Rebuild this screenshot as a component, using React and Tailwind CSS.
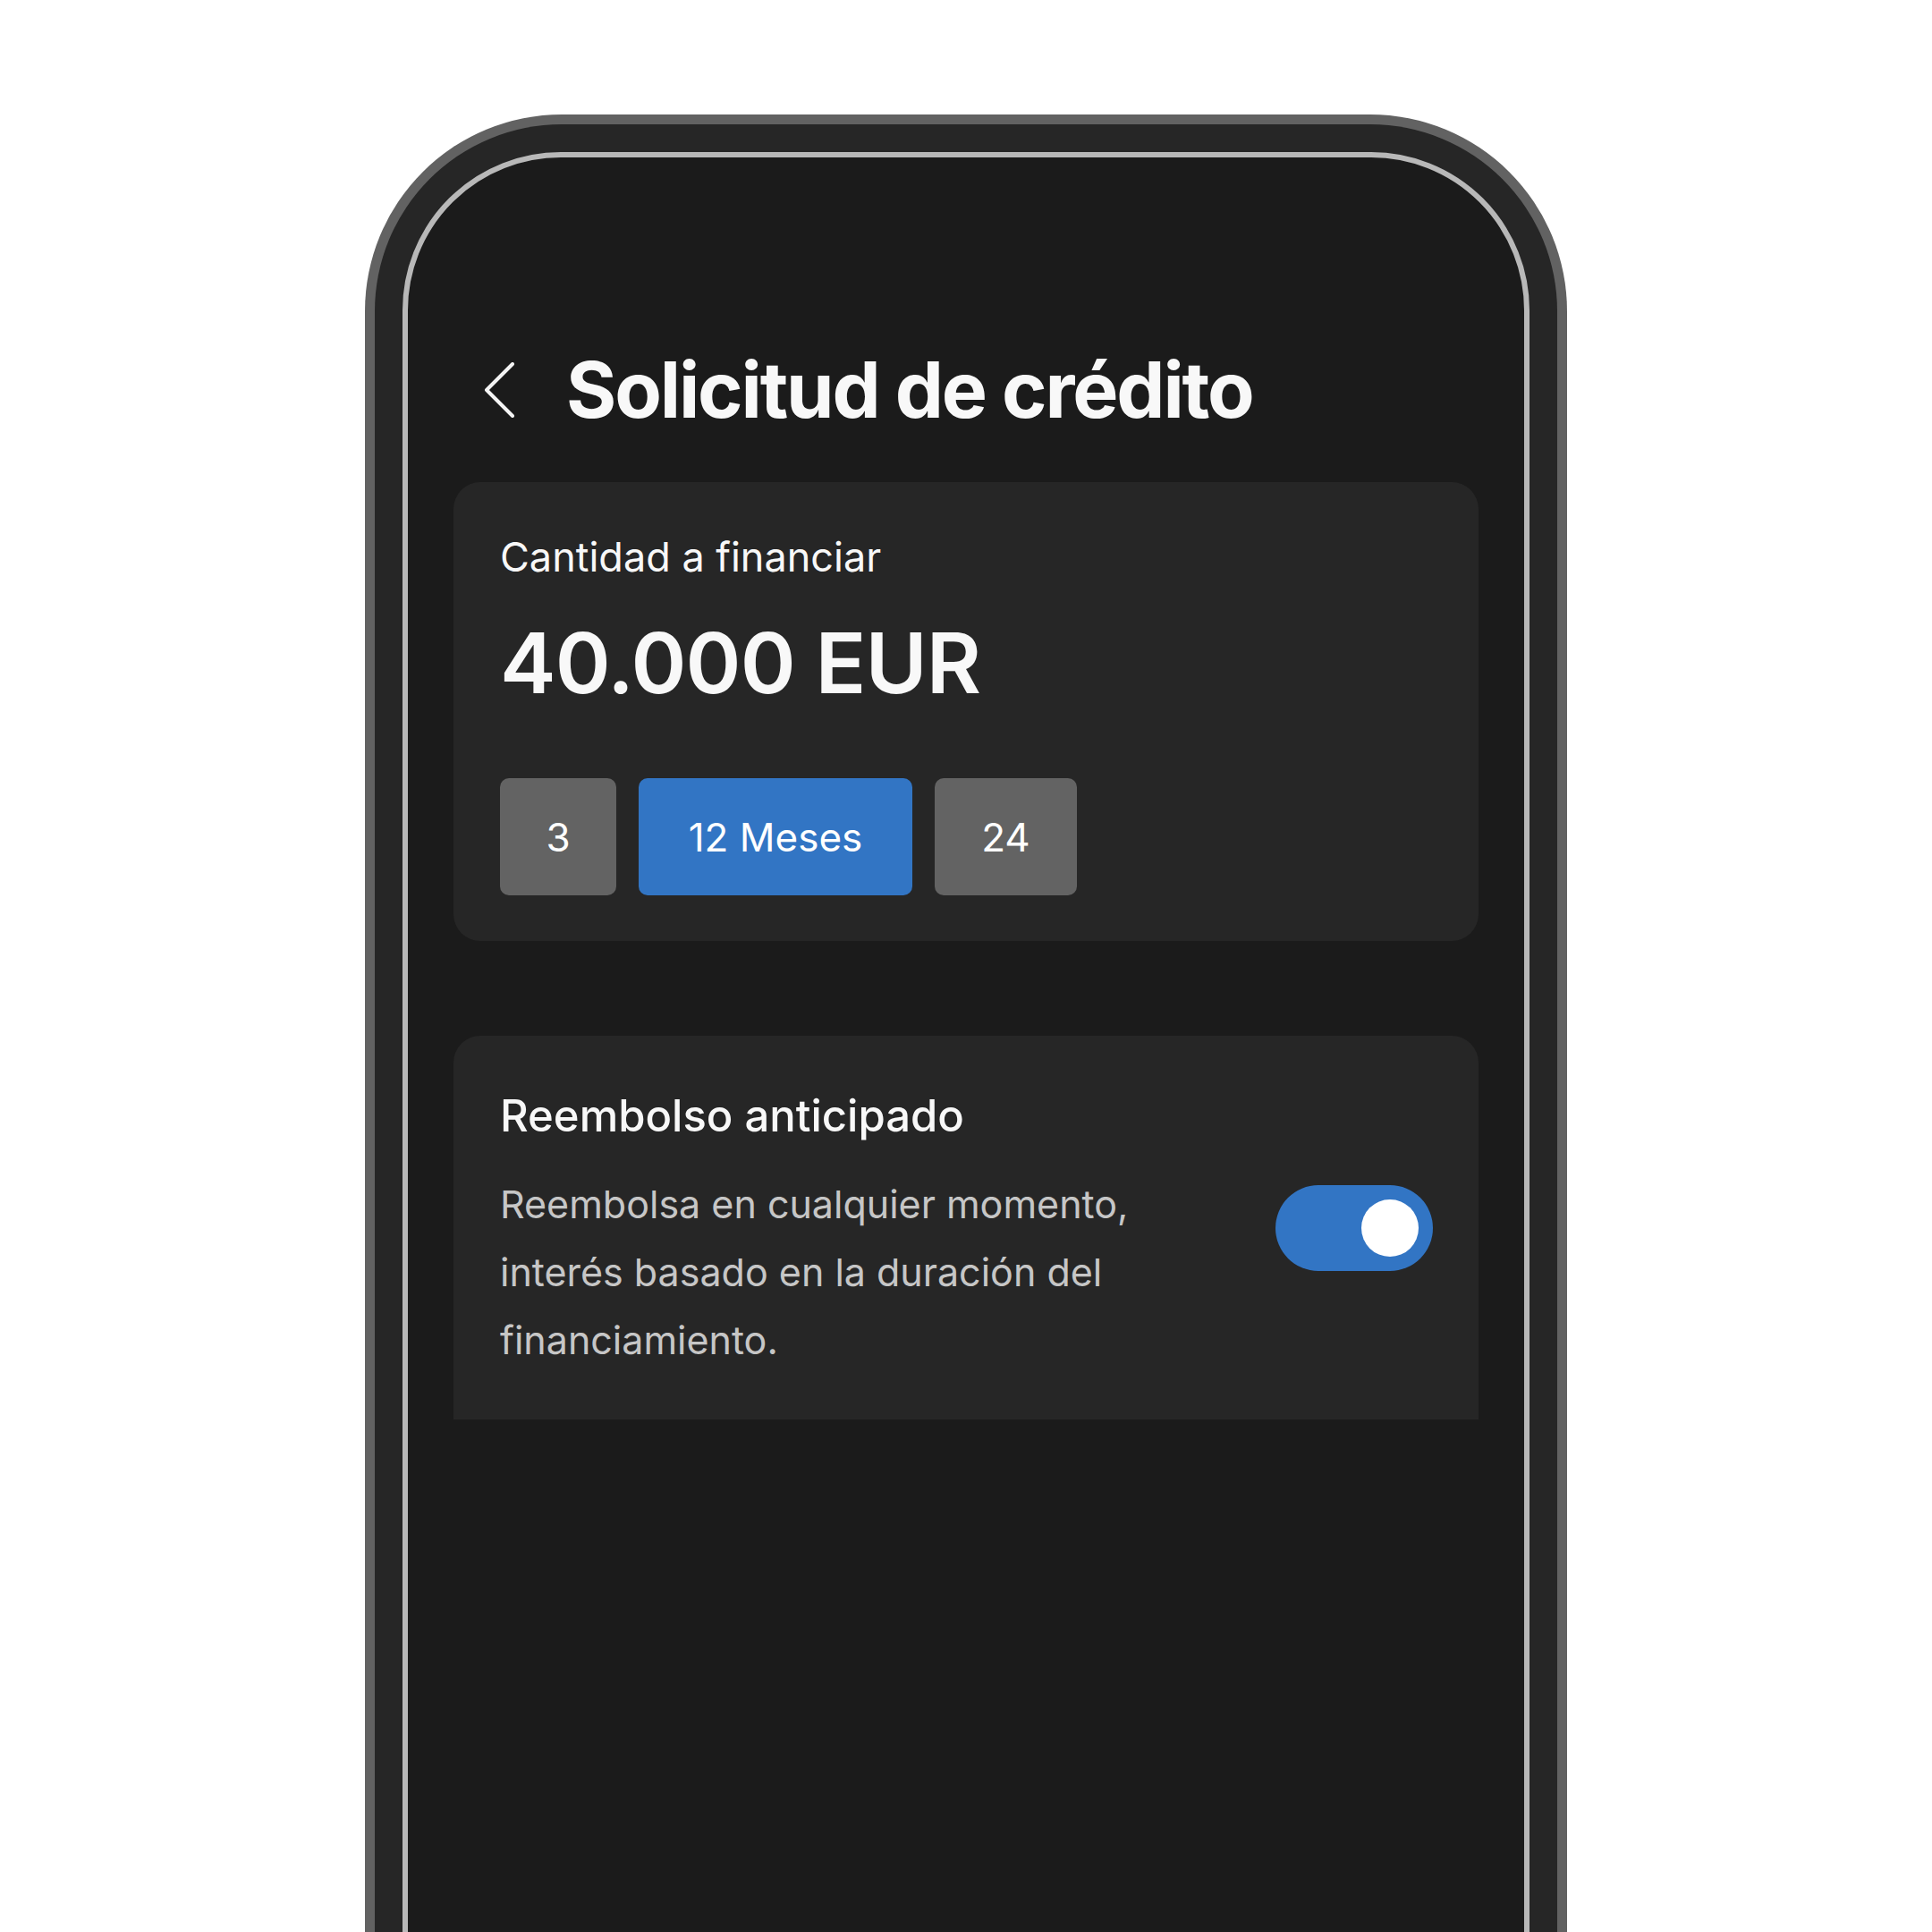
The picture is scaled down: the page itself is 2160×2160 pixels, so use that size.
import { useState } from 'react'

const TERMS = [
  { id: 3, label: '3', width: 'w-[130px]' },
  { id: 12, label: '12 Meses', width: 'w-[306px]' },
  { id: 24, label: '24', width: 'w-[159px]' },
]

function BackChevron() {
  return (
    <svg width="34" height="62" viewBox="0 0 34 62" fill="none">
      <polyline
        points="32,2 3,31 32,60"
        stroke="#f5f5f5"
        strokeWidth="4"
        strokeLinecap="round"
        strokeLinejoin="round"
      />
    </svg>
  )
}

function Toggle({ on, onChange }) {
  return (
    <button
      onClick={() => onChange(!on)}
      className={`flex h-[96px] w-[176px] shrink-0 items-center rounded-full px-[16px] ${
        on ? 'justify-end bg-[#3275c4]' : 'justify-start bg-[#555555]'
      }`}
    >
      <span className="block h-[64px] w-[64px] rounded-full bg-white" />
    </button>
  )
}

export default function App() {
  const [term, setTerm] = useState(12)
  const [early, setEarly] = useState(true)

  return (
    <div
      className="flex h-[2160px] w-full justify-center overflow-hidden bg-white pt-[128px]"
      style={{ fontFamily: 'Inter, "Noto Sans", sans-serif' }}
    >
      {/* Phone frame: outer rim, bezel, screen edge */}
      <div className="h-[2300px] w-[1344px] shrink-0 rounded-[220px] bg-[#626262] p-[11px]">
        <div className="h-full w-full rounded-[209px] bg-[#262626] p-[31px]">
          <div className="h-full w-full rounded-[177px] border-[6px] border-[#b8b8b8] bg-[#1b1b1b] px-[51px] pt-[217px]">
            {/* Header */}
            <div className="flex items-center gap-[58px] pl-[34px]">
              <BackChevron />
              <h1 className="text-[86px] font-bold leading-none tracking-[-0.025em] text-[#f8f8f8]">
                Solicitud de crédito
              </h1>
            </div>

            {/* Amount card */}
            <div className="mt-[60px] rounded-[30px] bg-[#262626] px-[52px] pb-[51px] pt-[61px]">
              <p className="text-[45px] leading-none text-[#f8f8f8]">Cantidad a financiar</p>
              <p className="mt-[49px] text-[94px] font-semibold leading-none tracking-[-0.01em] text-[#f8f8f8]">
                40.000 EUR
              </p>
              <div className="mt-[82px] flex gap-[25px]">
                {TERMS.map(t => (
                  <button
                    key={t.id}
                    onClick={() => setTerm(t.id)}
                    className={`flex h-[131px] items-center justify-center rounded-[10px] text-[44px] leading-none text-white ${t.width} ${
                      term === t.id ? 'bg-[#3275c4]' : 'bg-[#636363]'
                    }`}
                  >
                    {t.label}
                  </button>
                ))}
              </div>
            </div>

            {/* Early repayment card */}
            <div className="mt-[106px] rounded-t-[30px] bg-[#262626] px-[51px] pb-[51px] pt-[65px]">
              <p className="pl-[1px] text-[49px] font-medium leading-none text-[#f8f8f8]">
                Reembolso anticipado
              </p>
              <div className="mt-[36px] flex items-start justify-between">
                <p className="w-[800px] pl-[1px] text-[43px] leading-[76px] text-[#c6c6c6]">
                  Reembolsa en cualquier momento, interés basado en la duración del financiamiento.
                </p>
                <div className="mt-[17px]">
                  <Toggle on={early} onChange={setEarly} />
                </div>
              </div>
            </div>
          </div>
        </div>
      </div>
    </div>
  )
}
